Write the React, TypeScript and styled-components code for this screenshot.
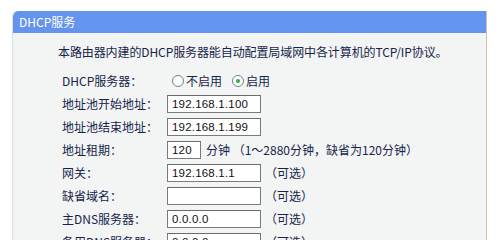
import styled, { createGlobalStyle } from 'styled-components';

const GlobalStyle = createGlobalStyle`
  html, body {
    margin: 0;
    padding: 0;
    background: #ffffff;
  }
  body {
    font-family: "Noto Sans CJK SC", "DejaVu Sans", sans-serif;
    font-size: 12px;
    color: #16244a;
  }
`;

const Page = styled.div`
  padding: 11px 0 0 12px;
  width: 475px;
`;

const Panel = styled.div`
  background: #f3f4f4;
  border-left: 1px solid #dcdfe3;
  border-right: 1px solid #d9c2a3;
  border-radius: 6px 0 0 0;
  overflow: hidden;
  height: 240px;
`;

const Header = styled.div`
  height: 22px;
  background: #6594ee;
  color: #ffffff;
  font-size: 12px;
  line-height: 22px;
  padding-left: 6px;
`;

const Body = styled.div`
  padding: 10px 0 0 45px;
`;

const Intro = styled.div`
  line-height: 18px;
  height: 18px;
  margin-bottom: 8px;
  letter-spacing: -0.1px;
`;

const Row = styled.div`
  display: flex;
  align-items: center;
  height: 23px;
  padding-left: 4px;
`;

const Label = styled.div`
  width: 105px;
  flex: none;
  white-space: nowrap;
`;

const Field = styled.div<{ $w: number }>`
  width: ${p => p.$w}px;
  height: 16px;
  box-sizing: content-box;
  border: 1px solid #7b7b7b;
  border-top-color: #6a6a6a;
  background: #ffffff;
  font-family: "Liberation Sans", sans-serif;
  font-size: 11.5px;
  line-height: 16px;
  padding-left: 4px;
  flex: none;
  color: #101010;
  letter-spacing: 0.2px;
`;

const Note = styled.span<{ $gap: number }>`
  margin-left: ${p => p.$gap}px;
  white-space: nowrap;
`;

const Radios = styled.div`
  display: flex;
  align-items: center;
  padding-left: 5px;
`;

const Radio = styled.span<{ $on?: boolean }>`
  width: 10px;
  height: 10px;
  border: 1px solid #6f7f96;
  border-radius: 50%;
  background: #ffffff;
  display: inline-flex;
  align-items: center;
  justify-content: center;
  margin-right: 2px;

  &::after {
    content: '';
    width: 4px;
    height: 4px;
    border-radius: 50%;
    background: ${p => (p.$on ? '#3aa84a' : 'transparent')};
  }
`;

const RadioText = styled.span<{ $gap?: number }>`
  margin-right: ${p => p.$gap ?? 0}px;
`;

const rows: { label: string; value: string }[] = [
  { label: '地址池开始地址：', value: '192.168.1.100' },
  { label: '地址池结束地址：', value: '192.168.1.199' },
];

const dnsRows: { label: string; value: string }[] = [
  { label: '网关：', value: '192.168.1.1' },
  { label: '缺省域名：', value: '' },
  { label: '主DNS服务器：', value: '0.0.0.0' },
  { label: '备用DNS服务器：', value: '0.0.0.0' },
];

export default function App() {
  return (
    <>
      <GlobalStyle />
      <Page>
        <Panel>
          <Header>DHCP服务</Header>
          <Body>
            <Intro>本路由器内建的DHCP服务器能自动配置局域网中各计算机的TCP/IP协议。</Intro>
            <Row>
              <Label>DHCP服务器：</Label>
              <Radios>
                <Radio />
                <RadioText $gap={10}>不启用</RadioText>
                <Radio $on />
                <RadioText>启用</RadioText>
              </Radios>
            </Row>
            {rows.map(r => (
              <Row key={r.label}>
                <Label>{r.label}</Label>
                <Field $w={88}>{r.value}</Field>
              </Row>
            ))}
            <Row>
              <Label>地址租期：</Label>
              <Field $w={28}>120</Field>
              <Note $gap={5}>分钟 （1～2880分钟，缺省为120分钟）</Note>
            </Row>
            {dnsRows.map(r => (
              <Row key={r.label}>
                <Label>{r.label}</Label>
                <Field $w={88}>{r.value}</Field>
                <Note $gap={4}>（可选）</Note>
              </Row>
            ))}
          </Body>
        </Panel>
      </Page>
    </>
  );
}
